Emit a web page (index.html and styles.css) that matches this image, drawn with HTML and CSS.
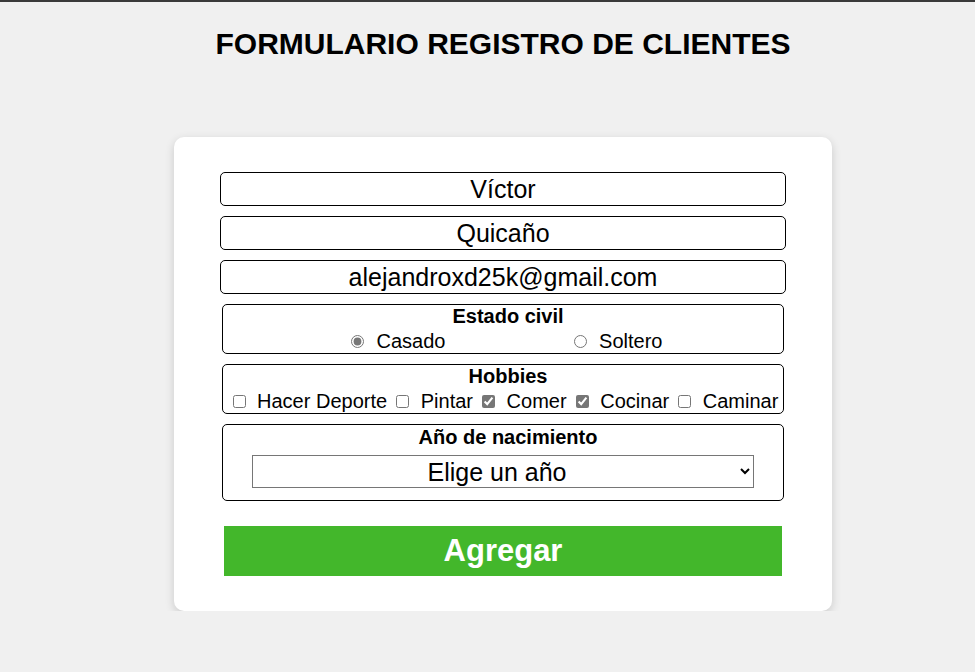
FILE: index.html
```html
<!DOCTYPE html>
<html lang="es">
<head>
<meta charset="utf-8">
<title>Formulario registro de clientes</title>
<link rel="stylesheet" href="styles.css">
</head>
<body>
<div class="topbar"></div>
<main class="page">
  <h1 class="title">FORMULARIO REGISTRO DE CLIENTES</h1>
  <form class="card">
    <input class="field" type="text" value="Víctor">
    <input class="field" type="text" value="Quicaño">
    <input class="field" type="email" value="alejandroxd25k@gmail.com">
    <div class="group">
      <div class="group-title">Estado civil</div>
      <div class="radios">
        <label class="opt"><input type="radio" name="ec" checked> Casado</label>
        <label class="opt"><input type="radio" name="ec"> Soltero</label>
      </div>
    </div>
    <div class="group">
      <div class="group-title">Hobbies</div>
      <div class="checks"><label class="opt"><input type="checkbox"> Hacer Deporte</label> <label class="opt"><input type="checkbox"> Pintar</label> <label class="opt"><input type="checkbox" checked> Comer</label> <label class="opt"><input type="checkbox" checked> Cocinar</label> <label class="opt"><input type="checkbox"> Caminar</label></div>
    </div>
    <div class="group group-year">
      <div class="group-title">Año de nacimiento</div>
      <select class="year">
        <option>Elige un año</option>
        <option>1990</option>
        <option>2000</option>
      </select>
    </div>
    <button class="submit" type="button">Agregar</button>
  </form>
</main>
</body>
</html>
```

FILE: styles.css
```css
* { box-sizing: border-box; }

html, body {
  margin: 0;
  padding: 0;
  background: #f0f0f0;
  font-family: "Liberation Sans", Arial, sans-serif;
  color: #000;
}

.topbar {
  height: 2px;
  background: #3a3a3a;
}

.page {
  display: flex;
  flex-direction: column;
  align-items: center;
  padding-left: 31px;
}

.title {
  margin: 25px 0 0;
  font-size: 30px;
  font-weight: bold;
  line-height: 34px;
}

.card {
  margin-top: 76px;
  width: 658px;
  background: #fff;
  border-radius: 10px;
  box-shadow: 0 3px 10px rgba(0, 0, 0, 0.16);
  padding: 35px 46px 35px;
  display: flex;
  flex-direction: column;
}

.field {
  width: 100%;
  height: 34px;
  border: 1px solid #000;
  border-radius: 5px;
  font-family: inherit;
  font-size: 25px;
  text-align: center;
  padding: 0 4px;
  margin: 0 0 10px;
  background: #fff;
  color: #000;
}

.group {
  margin: 0 2px 10px;
  border: 1px solid #000;
  border-radius: 5px;
  text-align: center;
  height: 50px;
}

.group-title {
  font-weight: bold;
  font-size: 20px;
  line-height: 23px;
  padding-left: 10px;
}

.radios {
  display: flex;
  gap: 128px;
  padding: 2px 0 0 128px;
  font-size: 20px;
  line-height: 23px;
}

.checks {
  font-size: 20px;
  line-height: 23px;
  white-space: nowrap;
  padding: 2px 0 0 6px;
  text-align: left;
}

.opt input {
  accent-color: #767676;
  width: 13px;
  height: 13px;
  margin: 3px 6px 3px 3.5px;
}

.radios .opt input {
  margin: 3px 7px 0 0;
}

.group-year {
  height: 77px;
}

.group-year .group-title {
  line-height: 24px;
}

.year {
  display: block;
  width: 502px;
  height: 33px;
  margin: 6px auto 0;
  border: 1px solid #767676;
  border-radius: 0;
  background: #fff;
  font-family: inherit;
  font-size: 25px;
  text-align: center;
  color: #000;
}

.submit {
  margin: 15px 4px 0;
  height: 50px;
  border: none;
  background: #43b72b;
  color: #fff;
  font-family: inherit;
  font-size: 31px;
  font-weight: bold;
  cursor: pointer;
}
```
